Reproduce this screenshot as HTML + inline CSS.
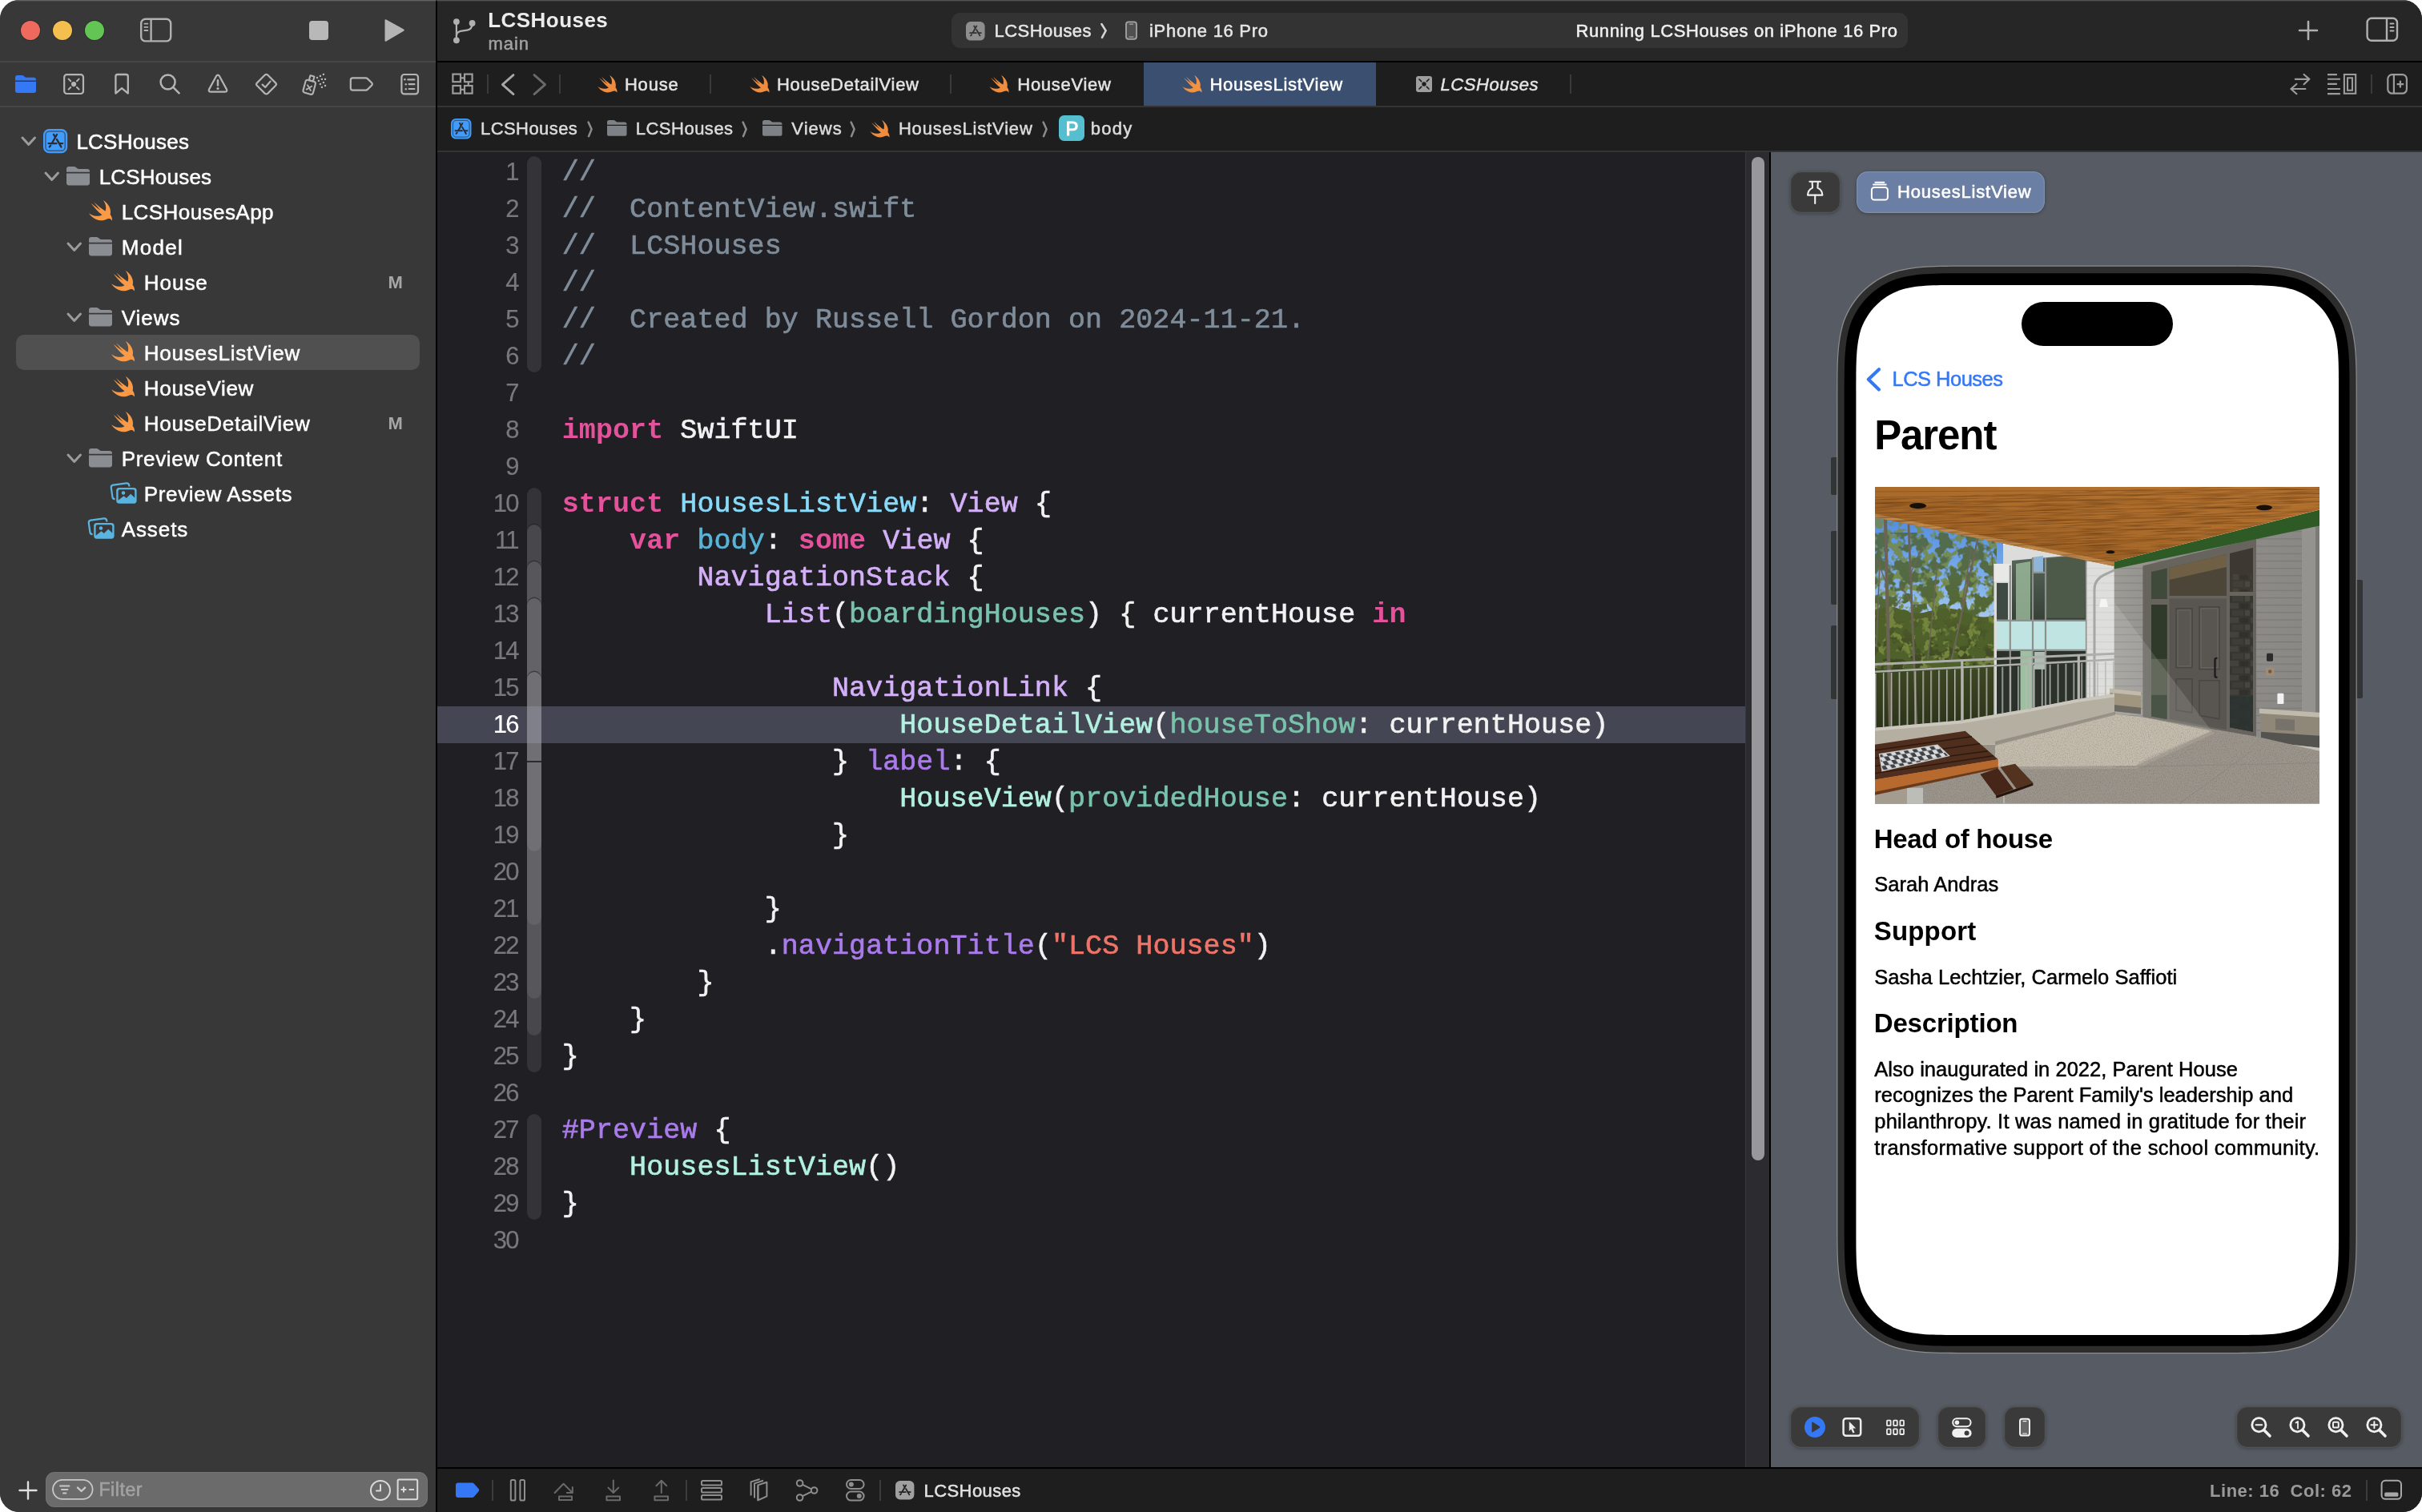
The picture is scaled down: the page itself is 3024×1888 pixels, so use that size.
<!DOCTYPE html><html lang="en"><head><meta charset="utf-8"><title>LCSHouses — HousesListView.swift</title><style>
html,body{margin:0;padding:0;background:#fff;}
body{width:3024px;height:1888px;overflow:hidden;position:relative;font-family:"Liberation Sans",sans-serif;}
#win{position:absolute;left:0;top:0;width:3024px;height:1888px;overflow:hidden;border-radius:24px;background:#1e1e1e;will-change:transform;}
#win div,#win span.t,#win svg{position:absolute;}
#win svg{overflow:visible;display:block;}
.t{white-space:pre;line-height:1;margin:0;padding:0;-webkit-text-stroke:.5px currentColor;}
.ln{font-size:31px;letter-spacing:-1.9px;-webkit-text-stroke:.2px currentColor !important;}
.code{font-family:"Liberation Mono",monospace;font-size:35px;letter-spacing:.07px;color:#f2f2f2;-webkit-text-stroke:.65px currentColor;}
.code span{-webkit-text-stroke:.65px currentColor;}
.code .k{-webkit-text-stroke:0;}
</style></head><body><div id="win">
<div style="left:0px;top:0px;width:544px;height:1888px;background:#383838;"></div>
<div style="left:544px;top:0px;width:2px;height:1888px;background:#000;"></div>
<div style="left:546px;top:0px;width:2478px;height:76px;background:#262626;"></div>
<div style="left:546px;top:76px;width:2478px;height:2px;background:#000;"></div>
<div style="left:546px;top:78px;width:2478px;height:54px;background:#1e1e1e;"></div>
<div style="left:546px;top:132px;width:2478px;height:2px;background:#343434;"></div>
<div style="left:546px;top:134px;width:2478px;height:54px;background:#1e1e1e;"></div>
<div style="left:546px;top:188px;width:2478px;height:2px;background:#343434;"></div>
<div style="left:0px;top:76px;width:544px;height:2px;background:#464646;"></div>
<div style="left:0px;top:132px;width:544px;height:2px;background:#464646;"></div>
<div style="left:0;top:0;width:3024px;height:1px;background:rgba(255,255,255,.21)"></div>
<div style="left:0;top:1px;width:3024px;height:1px;background:rgba(255,255,255,.07)"></div>
<div style="left:25.8px;top:25.8px;width:24.4px;height:24.4px;border-radius:50%;background:#ee6a5f;box-shadow:0 0 0 1px rgba(0,0,0,.18)"></div>
<div style="left:65.8px;top:25.8px;width:24.4px;height:24.4px;border-radius:50%;background:#f5bf4f;box-shadow:0 0 0 1px rgba(0,0,0,.18)"></div>
<div style="left:105.8px;top:25.8px;width:24.4px;height:24.4px;border-radius:50%;background:#62c554;box-shadow:0 0 0 1px rgba(0,0,0,.18)"></div>
<svg style="left:174px;top:21px;" width="42" height="33" viewBox="0 0 42 33"><g fill="none" stroke="#b0b0b0" stroke-width="2.4"><rect x="2.2" y="2.8" width="37" height="27.6" rx="5.5"/><path d="M14.6 3V30"/></g><g stroke="#b0b0b0" stroke-width="1.8" stroke-linecap="round"><path d="M6.4 8.6H10.4M6.4 12.8H10.4M6.4 17H10.4"/></g></svg>
<div style="left:386px;top:26px;width:24px;height:24px;background:#b8b8b8;border-radius:4px"></div>
<svg style="left:478px;top:22px;" width="30" height="32" viewBox="0 0 30 32"><path d="M2.5 3.6Q2.5 1.6 4.3 2.5L26 14.4Q27.8 15.6 26 16.8L4.3 29.5Q2.5 30.4 2.5 28.4Z" fill="#b4b4b4"/></svg>
<svg style="left:563px;top:21px;" width="34" height="35" viewBox="0 0 34 35"><g fill="#b0b0b0"><circle cx="6.9" cy="6.1" r="3.9"/><circle cx="6.9" cy="29.3" r="3.9"/><circle cx="26.6" cy="8" r="3.9"/></g><g fill="none" stroke="#b0b0b0" stroke-width="2.2"><path d="M6.9 6V29"/><path d="M26.6 8Q26.6 15.6 20.4 16.6L12 17.8Q6.9 18.8 6.9 24"/></g></svg>
<span class="t" style="top:12.29px;font-size:26px;color:#ececec;left:609.23px;font-weight:700;-webkit-text-stroke:0;letter-spacing:0.459px">LCSHouses</span>
<span class="t" style="top:44.18px;font-size:22px;color:#a2a2a2;left:609.50px;letter-spacing:0.948px">main</span>
<div style="left:1188px;top:16px;width:1194px;height:44px;background:#333333;border-radius:11px"></div>
<svg style="left:1205.5px;top:26.8px" width="23.6" height="23.6" viewBox="0 0 30 30"><rect x="0" y="0" width="30" height="30" rx="7.4" fill="#8e8e8e"/><g stroke="#333" stroke-width="2.3" stroke-linecap="round" fill="none"><path d="M16.9 7L11 17.4"/><path d="M12.9 6.9L14.5 9.6"/><path d="M16.7 12.8L22.2 22.3"/><path d="M6.5 18H16.4M20.9 18H24"/><path d="M7.7 22.3L9.2 20.5"/></g></svg>
<span class="t" style="top:27.58px;font-size:22px;color:#e6e6e6;left:1241.50px;letter-spacing:0.455px">LCSHouses</span>
<svg style="left:1372px;top:27px;" width="14" height="24" viewBox="0 0 14 24"><path d="M3.4 3L8.6 11.4L4 19.8" fill="none" stroke="#d4d4d4" stroke-width="2.6" stroke-linecap="round"/></svg>
<svg style="left:1403px;top:24px;" width="19" height="28" viewBox="0 0 19 28"><rect x="3" y="3.4" width="13" height="21.4" rx="3" fill="#505050" stroke="#a4a4a4" stroke-width="1.8"/><path d="M7.4 6.2H11.6M7 22.2H12" stroke="#a4a4a4" stroke-width="1.2" stroke-linecap="round"/></svg>
<span class="t" style="top:27.58px;font-size:22px;color:#e6e6e6;left:1435.00px;letter-spacing:0.716px">iPhone 16 Pro</span>
<span class="t" style="top:27.58px;font-size:22px;color:#f0f0f0;left:1967.50px;letter-spacing:0.604px">Running LCSHouses on iPhone 16 Pro</span>
<svg style="left:2868px;top:24px;" width="28" height="28" viewBox="0 0 28 28"><path d="M14 3V25M3 14H25" stroke="#b0b0b0" stroke-width="2.6" stroke-linecap="round"/></svg>
<svg style="left:2953px;top:20px;" width="43" height="34" viewBox="0 0 43 34"><g fill="none" stroke="#b0b0b0" stroke-width="2.4"><rect x="2.6" y="2.8" width="37.4" height="28" rx="5.5"/><path d="M27 3V31"/></g><g stroke="#b0b0b0" stroke-width="2" stroke-linecap="round"><path d="M31.5 9.5H35.5M31.5 14H35.5M31.5 18.5H35.5"/></g></svg>
<svg style="left:563px;top:90px;" width="30" height="30" viewBox="0 0 30 30"><g fill="none" stroke="#9c9c9c" stroke-width="2.2"><rect x="2.4" y="2.6" width="9.6" height="9.6"/><rect x="17" y="2.6" width="9.6" height="9.6"/><rect x="2.4" y="17" width="9.6" height="9.6"/><rect x="17" y="17" width="9.6" height="9.6"/><path d="M12 7.4H17M21.8 12.2V17M12 21.8H17"/></g></svg>
<div style="left:608px;top:93px;width:2px;height:24px;background:#3a3a3a;"></div>
<svg style="left:622px;top:90px;" width="24" height="32" viewBox="0 0 24 32"><path d="M19 3.6L5.4 15.6L19 27.6" fill="none" stroke="#a8a8a8" stroke-width="2.8" stroke-linecap="round" stroke-linejoin="round"/></svg>
<svg style="left:662px;top:90px;" width="24" height="32" viewBox="0 0 24 32"><path d="M5 3.6L18.6 15.6L5 27.6" fill="none" stroke="#6a6a6a" stroke-width="2.8" stroke-linecap="round" stroke-linejoin="round"/></svg>
<div style="left:698px;top:93px;width:2px;height:24px;background:#3a3a3a;"></div>
<div style="left:1428px;top:78px;width:290px;height:54px;background:#3b5070;"></div>
<svg style="left:745.8px;top:94.4px" width="24.5" height="21.5" viewBox="2.41 3.41 18.12 16.22" preserveAspectRatio="none"><path d="M13.543 3.41c4.114 2.47 6.545 7.162 5.549 11.131-.024.093-.05.181-.076.272l.002.001c2.062 2.538 1.5 5.258 1.236 4.745-1.072-2.086-3.066-1.568-4.088-1.043a6.803 6.803 0 0 1-.281.158l-.02.012-.002.002c-2.115 1.123-4.957 1.205-7.812-.022a12.568 12.568 0 0 1-5.64-4.838c.649.48 1.35.902 2.097 1.252 3.019 1.414 6.051 1.311 8.197-.002C9.651 12.73 7.101 9.67 5.146 7.191a10.628 10.628 0 0 1-1.005-1.384c2.34 2.142 6.038 4.83 7.365 5.576C8.69 8.408 6.208 4.743 6.324 4.86c4.436 4.47 8.528 6.996 8.528 6.996.154.085.27.154.36.213.085-.215.16-.437.224-.668.708-2.588-.09-5.548-1.893-7.992z" fill="#ee8d40"/></svg>
<span class="t" style="top:95.38px;font-size:22px;color:#e4e4e4;left:779.90px;letter-spacing:0.834px">House</span>
<div style="left:886px;top:93px;width:2px;height:24px;background:#3a3a3a;"></div>
<svg style="left:935.8px;top:94.4px" width="24.5" height="21.5" viewBox="2.41 3.41 18.12 16.22" preserveAspectRatio="none"><path d="M13.543 3.41c4.114 2.47 6.545 7.162 5.549 11.131-.024.093-.05.181-.076.272l.002.001c2.062 2.538 1.5 5.258 1.236 4.745-1.072-2.086-3.066-1.568-4.088-1.043a6.803 6.803 0 0 1-.281.158l-.02.012-.002.002c-2.115 1.123-4.957 1.205-7.812-.022a12.568 12.568 0 0 1-5.64-4.838c.649.48 1.35.902 2.097 1.252 3.019 1.414 6.051 1.311 8.197-.002C9.651 12.73 7.101 9.67 5.146 7.191a10.628 10.628 0 0 1-1.005-1.384c2.34 2.142 6.038 4.83 7.365 5.576C8.69 8.408 6.208 4.743 6.324 4.86c4.436 4.47 8.528 6.996 8.528 6.996.154.085.27.154.36.213.085-.215.16-.437.224-.668.708-2.588-.09-5.548-1.893-7.992z" fill="#ee8d40"/></svg>
<span class="t" style="top:95.38px;font-size:22px;color:#e4e4e4;left:970.00px;letter-spacing:0.706px">HouseDetailView</span>
<div style="left:1186px;top:93px;width:2px;height:24px;background:#3a3a3a;"></div>
<svg style="left:1235.3px;top:94.4px" width="24.5" height="21.5" viewBox="2.41 3.41 18.12 16.22" preserveAspectRatio="none"><path d="M13.543 3.41c4.114 2.47 6.545 7.162 5.549 11.131-.024.093-.05.181-.076.272l.002.001c2.062 2.538 1.5 5.258 1.236 4.745-1.072-2.086-3.066-1.568-4.088-1.043a6.803 6.803 0 0 1-.281.158l-.02.012-.002.002c-2.115 1.123-4.957 1.205-7.812-.022a12.568 12.568 0 0 1-5.64-4.838c.649.48 1.35.902 2.097 1.252 3.019 1.414 6.051 1.311 8.197-.002C9.651 12.73 7.101 9.67 5.146 7.191a10.628 10.628 0 0 1-1.005-1.384c2.34 2.142 6.038 4.83 7.365 5.576C8.69 8.408 6.208 4.743 6.324 4.86c4.436 4.47 8.528 6.996 8.528 6.996.154.085.27.154.36.213.085-.215.16-.437.224-.668.708-2.588-.09-5.548-1.893-7.992z" fill="#ee8d40"/></svg>
<span class="t" style="top:95.38px;font-size:22px;color:#e4e4e4;left:1270.30px;letter-spacing:0.705px">HouseView</span>
<svg style="left:1475.8px;top:94.4px" width="24.5" height="21.5" viewBox="2.41 3.41 18.12 16.22" preserveAspectRatio="none"><path d="M13.543 3.41c4.114 2.47 6.545 7.162 5.549 11.131-.024.093-.05.181-.076.272l.002.001c2.062 2.538 1.5 5.258 1.236 4.745-1.072-2.086-3.066-1.568-4.088-1.043a6.803 6.803 0 0 1-.281.158l-.02.012-.002.002c-2.115 1.123-4.957 1.205-7.812-.022a12.568 12.568 0 0 1-5.64-4.838c.649.48 1.35.902 2.097 1.252 3.019 1.414 6.051 1.311 8.197-.002C9.651 12.73 7.101 9.67 5.146 7.191a10.628 10.628 0 0 1-1.005-1.384c2.34 2.142 6.038 4.83 7.365 5.576C8.69 8.408 6.208 4.743 6.324 4.86c4.436 4.47 8.528 6.996 8.528 6.996.154.085.27.154.36.213.085-.215.16-.437.224-.668.708-2.588-.09-5.548-1.893-7.992z" fill="#f09444"/></svg>
<span class="t" style="top:95.38px;font-size:22px;color:#fff;left:1510.50px;letter-spacing:0.723px">HousesListView</span>
<svg style="left:1768px;top:94.9px;" width="20" height="20" viewBox="0 0 20 20"><rect x="0" y="0" width="20" height="20" rx="3" fill="#9e9e9e"/><g stroke="#1e1e1e" stroke-width="1.7" stroke-linecap="round"><path d="M4 4L6.6 6.6M16 4L13.4 6.6M4 16L6.6 13.4M16 16L13.4 13.4"/></g><circle cx="10" cy="10" r="2.7" fill="#1e1e1e"/></svg>
<span class="t" style="top:95.38px;font-size:22px;color:#e4e4e4;left:1798.50px;font-style:italic;letter-spacing:0.580px">LCSHouses</span>
<div style="left:1960px;top:93px;width:2px;height:24px;background:#3a3a3a;"></div>
<svg style="left:2857px;top:90px;" width="30" height="30" viewBox="0 0 30 30"><g fill="none" stroke="#9c9c9c" stroke-width="2.2" stroke-linecap="round" stroke-linejoin="round"><path d="M8.8 8.8H26M19.6 3L26.4 8.8L19.6 15.2"/><path d="M21.4 21H3.8M10.4 15L3.4 21L10.4 27.2"/></g></svg>
<svg style="left:2903px;top:90px;" width="42" height="30" viewBox="0 0 42 30"><g fill="none" stroke="#9c9c9c" stroke-width="2.1"><path d="M3 3.1H14.9M3 8.8H18.9M3 14.9H14.9M3 21H18.9M3 27.1H18.9"/><rect x="23.9" y="3" width="14.3" height="23.8"/><rect x="28" y="7.3" width="6" height="15.5"/></g></svg>
<div style="left:2960px;top:93px;width:2px;height:24px;background:#3a3a3a;"></div>
<svg style="left:2978px;top:90px;" width="30" height="30" viewBox="0 0 30 30"><g fill="none" stroke="#9c9c9c" stroke-width="2.2"><rect x="3.3" y="3.1" width="23.6" height="23.6" rx="5.4"/><path d="M10.9 3V27"/><path d="M14.6 15.1H23.2M18.9 10.8V19.4" stroke-linecap="butt"/></g></svg>
<svg style="left:563px;top:147.5px" width="25.5" height="25.5" viewBox="0 0 30 30"><rect x="0" y="0" width="30" height="30" rx="7.4" fill="#409cff"/><rect x="2.9" y="2.9" width="24.2" height="24.2" rx="4.8" fill="none" stroke="#38597c" stroke-width="1.5"/><g stroke="#2d2d2d" stroke-width="2.3" stroke-linecap="round" fill="none"><path d="M16.9 7L11 17.4"/><path d="M12.9 6.9L14.5 9.6"/><path d="M16.7 12.8L22.2 22.3"/><path d="M6.5 18H16.4M20.9 18H24"/><path d="M7.7 22.3L9.2 20.5"/></g></svg>
<span class="t" style="top:150.38px;font-size:22px;color:#dcdcdc;left:600.00px;letter-spacing:0.430px">LCSHouses</span>
<svg style="left:731.5px;top:150px;" width="12" height="22" viewBox="0 0 12 22"><path d="M2.6 2.6L6.6 11.4L3 20.2" fill="none" stroke="#8c8c8c" stroke-width="2.5" stroke-linecap="round" stroke-linejoin="miter"/></svg>
<svg style="left:758px;top:150px" width="24.5" height="19.8" viewBox="0 0 30 24" preserveAspectRatio="none"><path d="M0 3.2Q0 0 3.2 0H9.5Q11.3 0 12.6 1.2L13.6 2.1Q14.6 3 16 3H26.8Q30 3 30 6.2V7H0Z" fill="#7e8186"/><path d="M0 8.6H30V20.8Q30 24 26.8 24H3.2Q0 24 0 20.8Z" fill="#7e8186"/></svg>
<span class="t" style="top:150.38px;font-size:22px;color:#dcdcdc;left:793.70px;letter-spacing:0.505px">LCSHouses</span>
<svg style="left:925px;top:150px;" width="12" height="22" viewBox="0 0 12 22"><path d="M2.6 2.6L6.6 11.4L3 20.2" fill="none" stroke="#8c8c8c" stroke-width="2.5" stroke-linecap="round" stroke-linejoin="miter"/></svg>
<svg style="left:951.7px;top:150px" width="24.5" height="19.8" viewBox="0 0 30 24" preserveAspectRatio="none"><path d="M0 3.2Q0 0 3.2 0H9.5Q11.3 0 12.6 1.2L13.6 2.1Q14.6 3 16 3H26.8Q30 3 30 6.2V7H0Z" fill="#7e8186"/><path d="M0 8.6H30V20.8Q30 24 26.8 24H3.2Q0 24 0 20.8Z" fill="#7e8186"/></svg>
<span class="t" style="top:150.38px;font-size:22px;color:#dcdcdc;left:988.30px;letter-spacing:1.058px">Views</span>
<svg style="left:1060px;top:150px;" width="12" height="22" viewBox="0 0 12 22"><path d="M2.6 2.6L6.6 11.4L3 20.2" fill="none" stroke="#8c8c8c" stroke-width="2.5" stroke-linecap="round" stroke-linejoin="miter"/></svg>
<svg style="left:1085.6px;top:150px" width="24.5" height="21.5" viewBox="2.41 3.41 18.12 16.22" preserveAspectRatio="none"><path d="M13.543 3.41c4.114 2.47 6.545 7.162 5.549 11.131-.024.093-.05.181-.076.272l.002.001c2.062 2.538 1.5 5.258 1.236 4.745-1.072-2.086-3.066-1.568-4.088-1.043a6.803 6.803 0 0 1-.281.158l-.02.012-.002.002c-2.115 1.123-4.957 1.205-7.812-.022a12.568 12.568 0 0 1-5.64-4.838c.649.48 1.35.902 2.097 1.252 3.019 1.414 6.051 1.311 8.197-.002C9.651 12.73 7.101 9.67 5.146 7.191a10.628 10.628 0 0 1-1.005-1.384c2.34 2.142 6.038 4.83 7.365 5.576C8.69 8.408 6.208 4.743 6.324 4.86c4.436 4.47 8.528 6.996 8.528 6.996.154.085.27.154.36.213.085-.215.16-.437.224-.668.708-2.588-.09-5.548-1.893-7.992z" fill="#ee8d40"/></svg>
<span class="t" style="top:150.38px;font-size:22px;color:#dcdcdc;left:1121.90px;letter-spacing:0.831px">HousesListView</span>
<svg style="left:1300px;top:150px;" width="12" height="22" viewBox="0 0 12 22"><path d="M2.6 2.6L6.6 11.4L3 20.2" fill="none" stroke="#8c8c8c" stroke-width="2.5" stroke-linecap="round" stroke-linejoin="miter"/></svg>
<div style="left:1322px;top:143.7px;width:32px;height:32px;background:#55bfd0;border-radius:6.5px"></div>
<span class="t" style="top:148.68px;font-size:24px;color:#fff;left:1330.57px;-webkit-text-stroke:.9px #fff;">P</span>
<span class="t" style="top:150.38px;font-size:22px;color:#dcdcdc;left:1361.80px;letter-spacing:1.270px">body</span>
<svg style="left:19px;top:93.6px" width="26" height="22" viewBox="0 0 30 24" preserveAspectRatio="none"><path d="M0 3.2Q0 0 3.2 0H9.5Q11.3 0 12.6 1.2L13.6 2.1Q14.6 3 16 3H26.8Q30 3 30 6.2V7H0Z" fill="#3478f6"/><path d="M0 8.6H30V20.8Q30 24 26.8 24H3.2Q0 24 0 20.8Z" fill="#3478f6"/></svg>
<svg style="left:77px;top:90px;" width="30" height="30" viewBox="0 0 30 30"><g fill="none" stroke="#b4b4b4" stroke-width="2.2"><rect x="3.2" y="3.2" width="23.8" height="23.8" rx="3.2"/><g stroke-linecap="round" stroke-width="2"><path d="M8.6 8.6L11.2 11.2M21.6 8.6L19 11.2M8.6 21.6L11.2 19M21.6 21.6L19 19"/></g></g><circle cx="15.1" cy="15.1" r="3.1" fill="#b4b4b4"/></svg>
<svg style="left:140px;top:90px;" width="24" height="30" viewBox="0 0 24 30"><path d="M4.4 5.4Q4.4 3 6.8 3H17.4Q19.8 3 19.8 5.4V26.6L12.1 20.2L4.4 26.6Z" fill="none" stroke="#b4b4b4" stroke-width="2.3" stroke-linejoin="round"/></svg>
<svg style="left:197px;top:90px;" width="30" height="30" viewBox="0 0 30 30"><g fill="none" stroke="#b4b4b4" stroke-width="2.5" stroke-linecap="round"><circle cx="12.6" cy="12.4" r="9"/><path d="M19.4 19.2L26.6 26.4"/></g></svg>
<svg style="left:257px;top:90px;" width="30" height="30" viewBox="0 0 30 30"><path d="M15 3.6Q16.1 3.6 16.8 4.8L26 21.6Q27 24.4 24.4 24.6H5.6Q3 24.4 4 21.6L13.2 4.8Q13.9 3.6 15 3.6Z" fill="none" stroke="#b4b4b4" stroke-width="2.2" stroke-linejoin="round"/><path d="M15 10.2V16.6" stroke="#b4b4b4" stroke-width="2.5" stroke-linecap="round"/><circle cx="15" cy="20.6" r="1.55" fill="#b4b4b4"/></svg>
<svg style="left:317px;top:90px;" width="31" height="31" viewBox="0 0 31 31"><g fill="none" stroke="#b4b4b4" stroke-width="2.2" stroke-linejoin="round" stroke-linecap="round"><path d="M15.5 2.8Q16.4 2.8 17.4 3.8L27.2 13.6Q28.8 15.2 27.2 16.8L17.4 26.6Q15.5 28.2 13.6 26.6L3.8 16.8Q2.2 15.2 3.8 13.6L13.6 3.8Q14.6 2.8 15.5 2.8Z"/><path d="M10.6 15.6L14.2 19L20.6 11.6"/></g></svg>
<svg style="left:375px;top:90px;" width="36" height="31" viewBox="0 0 36 31"><g transform="translate(11.2 18.8) rotate(15)" fill="none" stroke="#b4b4b4" stroke-width="2.1" stroke-linejoin="round" stroke-linecap="round"><rect x="-6.4" y="-8.2" width="12.8" height="16.4" rx="2.8"/><rect x="-2.6" y="-14.4" width="5.2" height="6.2" rx=".4"/><path d="M-2.7 -1.8L2.7 3.6M2.7 -1.8L-2.7 3.6" stroke-width="1.9"/></g><g fill="#b4b4b4"><rect x="19.9" y="5.9" width="2.2" height="2.2"/><rect x="23.8" y="3.8" width="2.2" height="2.2"/><rect x="27.8" y="1.8" width="2.2" height="2.2"/><rect x="25.8" y="7.8" width="2.2" height="2.2"/><rect x="29.9" y="7.8" width="2.2" height="2.2"/><rect x="21.8" y="9.8" width="2.2" height="2.2"/><rect x="27.8" y="11.9" width="2.2" height="2.2"/><rect x="23.8" y="13.9" width="2.2" height="2.2"/><rect x="29.9" y="15.9" width="2.2" height="2.2"/><rect x="25.8" y="17.8" width="2.2" height="2.2"/></g></svg>
<svg style="left:434px;top:94px;" width="35" height="22" viewBox="0 0 35 22"><path d="M6.4 3.4H22.6Q24 3.4 25 4.4L30.4 9.8Q31.4 11 30.4 12.2L25 17.6Q24 18.6 22.6 18.6H6.4Q3.8 18.6 3.8 16V6Q3.8 3.4 6.4 3.4Z" fill="none" stroke="#b4b4b4" stroke-width="2.2" stroke-linejoin="round"/></svg>
<svg style="left:498px;top:90px;" width="28" height="30" viewBox="0 0 28 30"><rect x="3.4" y="3" width="20.6" height="24.4" rx="3.4" fill="none" stroke="#b4b4b4" stroke-width="2.2"/><g stroke="#b4b4b4" stroke-width="2.2" stroke-linecap="round"><path d="M11.4 9.4H19.4M12.6 15.2H19.4M12.6 21H19.4"/></g><g fill="#b4b4b4"><circle cx="7.4" cy="9.2" r="1.2"/><circle cx="8.8" cy="15.2" r="1.2"/><circle cx="8.8" cy="21.2" r="1.2"/></g></svg>
<div style="left:20px;top:418px;width:504px;height:43.5px;background:#505050;border-radius:10px"></div>
<svg style="left:26.25px;top:170.25px" width="19.5" height="12.5" viewBox="-2 -2 19.5 12.5"><path d="M0 0L7.75 8.5L15.5 0" fill="none" stroke="#9c9c9c" stroke-width="3" stroke-linecap="round" stroke-linejoin="round"/></svg>
<svg style="left:53.8px;top:161px" width="30.2" height="30.2" viewBox="0 0 30 30"><rect x="0" y="0" width="30" height="30" rx="7.4" fill="#409cff"/><rect x="2.9" y="2.9" width="24.2" height="24.2" rx="4.8" fill="none" stroke="#38597c" stroke-width="1.5"/><g stroke="#2d2d2d" stroke-width="2.3" stroke-linecap="round" fill="none"><path d="M16.9 7L11 17.4"/><path d="M12.9 6.9L14.5 9.6"/><path d="M16.7 12.8L22.2 22.3"/><path d="M6.5 18H16.4M20.9 18H24"/><path d="M7.7 22.3L9.2 20.5"/></g></svg>
<span class="t" style="top:163.59px;font-size:26px;color:#fff;left:95.43px;letter-spacing:0.219px">LCSHouses</span>
<svg style="left:55.25px;top:214.25px" width="19.5" height="12.5" viewBox="-2 -2 19.5 12.5"><path d="M0 0L7.75 8.5L15.5 0" fill="none" stroke="#9c9c9c" stroke-width="3" stroke-linecap="round" stroke-linejoin="round"/></svg>
<svg style="left:83px;top:207.5px" width="29" height="23.5" viewBox="0 0 30 24" preserveAspectRatio="none"><path d="M0 3.2Q0 0 3.2 0H9.5Q11.3 0 12.6 1.2L13.6 2.1Q14.6 3 16 3H26.8Q30 3 30 6.2V7H0Z" fill="#8a8d91"/><path d="M0 8.6H30V20.8Q30 24 26.8 24H3.2Q0 24 0 20.8Z" fill="#8a8d91"/></svg>
<span class="t" style="top:207.59px;font-size:26px;color:#fff;left:123.63px;letter-spacing:0.219px">LCSHouses</span>
<svg style="left:111px;top:250.4px" width="29" height="25.4" viewBox="2.41 3.41 18.12 16.22" preserveAspectRatio="none"><path d="M13.543 3.41c4.114 2.47 6.545 7.162 5.549 11.131-.024.093-.05.181-.076.272l.002.001c2.062 2.538 1.5 5.258 1.236 4.745-1.072-2.086-3.066-1.568-4.088-1.043a6.803 6.803 0 0 1-.281.158l-.02.012-.002.002c-2.115 1.123-4.957 1.205-7.812-.022a12.568 12.568 0 0 1-5.64-4.838c.649.48 1.35.902 2.097 1.252 3.019 1.414 6.051 1.311 8.197-.002C9.651 12.73 7.101 9.67 5.146 7.191a10.628 10.628 0 0 1-1.005-1.384c2.34 2.142 6.038 4.83 7.365 5.576C8.69 8.408 6.208 4.743 6.324 4.86c4.436 4.47 8.528 6.996 8.528 6.996.154.085.27.154.36.213.085-.215.16-.437.224-.668.708-2.588-.09-5.548-1.893-7.992z" fill="#fa9a46"/></svg>
<span class="t" style="top:251.59px;font-size:26px;color:#fff;left:151.63px;letter-spacing:0.445px">LCSHousesApp</span>
<svg style="left:83.25px;top:302.25px" width="19.5" height="12.5" viewBox="-2 -2 19.5 12.5"><path d="M0 0L7.75 8.5L15.5 0" fill="none" stroke="#9c9c9c" stroke-width="3" stroke-linecap="round" stroke-linejoin="round"/></svg>
<svg style="left:111px;top:295.5px" width="29" height="23.5" viewBox="0 0 30 24" preserveAspectRatio="none"><path d="M0 3.2Q0 0 3.2 0H9.5Q11.3 0 12.6 1.2L13.6 2.1Q14.6 3 16 3H26.8Q30 3 30 6.2V7H0Z" fill="#8a8d91"/><path d="M0 8.6H30V20.8Q30 24 26.8 24H3.2Q0 24 0 20.8Z" fill="#8a8d91"/></svg>
<span class="t" style="top:295.59px;font-size:26px;color:#fff;left:151.63px;letter-spacing:1.365px">Model</span>
<svg style="left:139px;top:338.4px" width="29" height="25.4" viewBox="2.41 3.41 18.12 16.22" preserveAspectRatio="none"><path d="M13.543 3.41c4.114 2.47 6.545 7.162 5.549 11.131-.024.093-.05.181-.076.272l.002.001c2.062 2.538 1.5 5.258 1.236 4.745-1.072-2.086-3.066-1.568-4.088-1.043a6.803 6.803 0 0 1-.281.158l-.02.012-.002.002c-2.115 1.123-4.957 1.205-7.812-.022a12.568 12.568 0 0 1-5.64-4.838c.649.48 1.35.902 2.097 1.252 3.019 1.414 6.051 1.311 8.197-.002C9.651 12.73 7.101 9.67 5.146 7.191a10.628 10.628 0 0 1-1.005-1.384c2.34 2.142 6.038 4.83 7.365 5.576C8.69 8.408 6.208 4.743 6.324 4.86c4.436 4.47 8.528 6.996 8.528 6.996.154.085.27.154.36.213.085-.215.16-.437.224-.668.708-2.588-.09-5.548-1.893-7.992z" fill="#fa9a46"/></svg>
<span class="t" style="top:339.59px;font-size:26px;color:#fff;left:179.83px;letter-spacing:0.958px">House</span>
<span class="t" style="top:341.78px;font-size:22px;color:#a6a6a6;left:484.50px;font-weight:700;-webkit-text-stroke:0;">M</span>
<svg style="left:83.25px;top:390.25px" width="19.5" height="12.5" viewBox="-2 -2 19.5 12.5"><path d="M0 0L7.75 8.5L15.5 0" fill="none" stroke="#9c9c9c" stroke-width="3" stroke-linecap="round" stroke-linejoin="round"/></svg>
<svg style="left:111px;top:383.5px" width="29" height="23.5" viewBox="0 0 30 24" preserveAspectRatio="none"><path d="M0 3.2Q0 0 3.2 0H9.5Q11.3 0 12.6 1.2L13.6 2.1Q14.6 3 16 3H26.8Q30 3 30 6.2V7H0Z" fill="#8a8d91"/><path d="M0 8.6H30V20.8Q30 24 26.8 24H3.2Q0 24 0 20.8Z" fill="#8a8d91"/></svg>
<span class="t" style="top:383.59px;font-size:26px;color:#fff;left:151.63px;letter-spacing:1.025px">Views</span>
<svg style="left:139px;top:426.4px" width="29" height="25.4" viewBox="2.41 3.41 18.12 16.22" preserveAspectRatio="none"><path d="M13.543 3.41c4.114 2.47 6.545 7.162 5.549 11.131-.024.093-.05.181-.076.272l.002.001c2.062 2.538 1.5 5.258 1.236 4.745-1.072-2.086-3.066-1.568-4.088-1.043a6.803 6.803 0 0 1-.281.158l-.02.012-.002.002c-2.115 1.123-4.957 1.205-7.812-.022a12.568 12.568 0 0 1-5.64-4.838c.649.48 1.35.902 2.097 1.252 3.019 1.414 6.051 1.311 8.197-.002C9.651 12.73 7.101 9.67 5.146 7.191a10.628 10.628 0 0 1-1.005-1.384c2.34 2.142 6.038 4.83 7.365 5.576C8.69 8.408 6.208 4.743 6.324 4.86c4.436 4.47 8.528 6.996 8.528 6.996.154.085.27.154.36.213.085-.215.16-.437.224-.668.708-2.588-.09-5.548-1.893-7.992z" fill="#fa9a46"/></svg>
<span class="t" style="top:427.59px;font-size:26px;color:#fff;left:179.83px;letter-spacing:0.760px">HousesListView</span>
<svg style="left:139px;top:470.4px" width="29" height="25.4" viewBox="2.41 3.41 18.12 16.22" preserveAspectRatio="none"><path d="M13.543 3.41c4.114 2.47 6.545 7.162 5.549 11.131-.024.093-.05.181-.076.272l.002.001c2.062 2.538 1.5 5.258 1.236 4.745-1.072-2.086-3.066-1.568-4.088-1.043a6.803 6.803 0 0 1-.281.158l-.02.012-.002.002c-2.115 1.123-4.957 1.205-7.812-.022a12.568 12.568 0 0 1-5.64-4.838c.649.48 1.35.902 2.097 1.252 3.019 1.414 6.051 1.311 8.197-.002C9.651 12.73 7.101 9.67 5.146 7.191a10.628 10.628 0 0 1-1.005-1.384c2.34 2.142 6.038 4.83 7.365 5.576C8.69 8.408 6.208 4.743 6.324 4.86c4.436 4.47 8.528 6.996 8.528 6.996.154.085.27.154.36.213.085-.215.16-.437.224-.668.708-2.588-.09-5.548-1.893-7.992z" fill="#fa9a46"/></svg>
<span class="t" style="top:471.59px;font-size:26px;color:#fff;left:179.83px;letter-spacing:0.680px">HouseView</span>
<svg style="left:139px;top:514.4px" width="29" height="25.4" viewBox="2.41 3.41 18.12 16.22" preserveAspectRatio="none"><path d="M13.543 3.41c4.114 2.47 6.545 7.162 5.549 11.131-.024.093-.05.181-.076.272l.002.001c2.062 2.538 1.5 5.258 1.236 4.745-1.072-2.086-3.066-1.568-4.088-1.043a6.803 6.803 0 0 1-.281.158l-.02.012-.002.002c-2.115 1.123-4.957 1.205-7.812-.022a12.568 12.568 0 0 1-5.64-4.838c.649.48 1.35.902 2.097 1.252 3.019 1.414 6.051 1.311 8.197-.002C9.651 12.73 7.101 9.67 5.146 7.191a10.628 10.628 0 0 1-1.005-1.384c2.34 2.142 6.038 4.83 7.365 5.576C8.69 8.408 6.208 4.743 6.324 4.86c4.436 4.47 8.528 6.996 8.528 6.996.154.085.27.154.36.213.085-.215.16-.437.224-.668.708-2.588-.09-5.548-1.893-7.992z" fill="#fa9a46"/></svg>
<span class="t" style="top:515.59px;font-size:26px;color:#fff;left:179.83px;letter-spacing:0.670px">HouseDetailView</span>
<span class="t" style="top:517.78px;font-size:22px;color:#a6a6a6;left:484.50px;font-weight:700;-webkit-text-stroke:0;">M</span>
<svg style="left:83.25px;top:566.25px" width="19.5" height="12.5" viewBox="-2 -2 19.5 12.5"><path d="M0 0L7.75 8.5L15.5 0" fill="none" stroke="#9c9c9c" stroke-width="3" stroke-linecap="round" stroke-linejoin="round"/></svg>
<svg style="left:111px;top:559.5px" width="29" height="23.5" viewBox="0 0 30 24" preserveAspectRatio="none"><path d="M0 3.2Q0 0 3.2 0H9.5Q11.3 0 12.6 1.2L13.6 2.1Q14.6 3 16 3H26.8Q30 3 30 6.2V7H0Z" fill="#8a8d91"/><path d="M0 8.6H30V20.8Q30 24 26.8 24H3.2Q0 24 0 20.8Z" fill="#8a8d91"/></svg>
<span class="t" style="top:559.59px;font-size:26px;color:#fff;left:151.63px;letter-spacing:0.695px">Preview Content</span>
<svg style="left:137.6px;top:602px" width="33" height="28" viewBox="0 0 33 28"><rect x="1.5" y="2.4" width="22.6" height="17.6" rx="3" fill="none" stroke="#5ab4e0" stroke-width="2.2" transform="rotate(-8 12.8 11.2)"/><rect x="5.6" y="5.4" width="28.4" height="22.8" rx="4.6" fill="#383838"/><rect x="7.2" y="6.9" width="25.4" height="19.8" rx="3.6" fill="#5ab4e0"/><path d="M9.6 11.3Q9.6 9.3 11.6 9.3H28.2Q30.2 9.3 30.2 11.3V19.4L25.2 14.8L19.8 20L16.6 17.2L9.6 22.8Z" fill="#383838"/><circle cx="16" cy="13.4" r="2.25" fill="#5ab4e0"/></svg>
<span class="t" style="top:603.59px;font-size:26px;color:#fff;left:179.83px;letter-spacing:0.646px">Preview Assets</span>
<svg style="left:109.6px;top:646px" width="33" height="28" viewBox="0 0 33 28"><rect x="1.5" y="2.4" width="22.6" height="17.6" rx="3" fill="none" stroke="#5ab4e0" stroke-width="2.2" transform="rotate(-8 12.8 11.2)"/><rect x="5.6" y="5.4" width="28.4" height="22.8" rx="4.6" fill="#383838"/><rect x="7.2" y="6.9" width="25.4" height="19.8" rx="3.6" fill="#5ab4e0"/><path d="M9.6 11.3Q9.6 9.3 11.6 9.3H28.2Q30.2 9.3 30.2 11.3V19.4L25.2 14.8L19.8 20L16.6 17.2L9.6 22.8Z" fill="#383838"/><circle cx="16" cy="13.4" r="2.25" fill="#5ab4e0"/></svg>
<span class="t" style="top:647.59px;font-size:26px;color:#fff;left:151.63px;letter-spacing:0.932px">Assets</span>
<svg style="left:22px;top:1848px;" width="26" height="26" viewBox="0 0 26 26"><path d="M13 2.5V23.5M2.5 13H23.5" stroke="#e0e0e0" stroke-width="2.4" stroke-linecap="round"/></svg>
<div style="left:56.5px;top:1838.3px;width:477.3px;height:43.3px;background:#6b6b6b;border-radius:11px;box-shadow:inset 0 0 0 1px rgba(255,255,255,.06)"></div>
<svg style="left:64px;top:1846px;" width="54" height="28" viewBox="0 0 54 28"><rect x="2" y="1.8" width="49.6" height="24" rx="12" fill="none" stroke="#c8c8c8" stroke-width="1.8"/><g stroke="#c8c8c8" stroke-width="2" stroke-linecap="round"><path d="M11 9.4H22.4M13 14H20.4M15 18.6H18.4"/></g><path d="M33 11.6L37.6 16L42.2 11.6" fill="none" stroke="#c8c8c8" stroke-width="2.4" stroke-linecap="round" stroke-linejoin="round"/></svg>
<span class="t" style="top:1849.03px;font-size:23px;color:#a2a2a2;left:123.44px;-webkit-text-stroke:.6px #a2a2a2;letter-spacing:0.584px">Filter</span>
<svg style="left:460px;top:1846px;" width="30" height="30" viewBox="0 0 30 30"><circle cx="15" cy="15" r="12" fill="none" stroke="#dadada" stroke-width="2"/><path d="M15 8V15.6H10" fill="none" stroke="#dadada" stroke-width="2" stroke-linecap="round" stroke-linejoin="round"/></svg>
<svg style="left:495px;top:1846px;" width="28" height="28" viewBox="0 0 28 28"><rect x="1.6" y="1.6" width="24.6" height="24.6" rx="1.5" fill="none" stroke="#dadada" stroke-width="2"/><path d="M5.6 14H12.4M9 10.6V17.4M15.6 14H22" stroke="#dadada" stroke-width="2" /></svg>
<div style="left:546px;top:190px;width:1633px;height:1642px;background:#1f1f24;"></div>
<div style="left:546px;top:882px;width:1633px;height:46px;background:#454653;"></div>
<div style="left:2179px;top:190px;width:30px;height:1642px;background:#2b2b30;"></div>
<div style="left:2179px;top:190px;width:1.4px;height:1642px;background:#38383d;"></div>
<div style="left:2209px;top:190px;width:2px;height:1642px;background:#000;"></div>
<div style="left:2187px;top:196px;width:16.3px;height:1253px;background:#98989a;border-radius:8.2px"></div>
<div style="left:658px;top:195px;width:18px;height:270px;background:#333338;border-radius:9px;box-shadow:0 -1.5px 0 0 rgba(31,31,36,.55)"></div>
<div style="left:658px;top:609px;width:18px;height:730px;background:#333338;border-radius:9px;box-shadow:0 -1.5px 0 0 rgba(31,31,36,.55)"></div>
<div style="left:658px;top:655px;width:18px;height:638px;background:#47474c;border-radius:9px;box-shadow:0 -1.5px 0 0 rgba(31,31,36,.55)"></div>
<div style="left:658px;top:701px;width:18px;height:546px;background:#56565b;border-radius:9px;box-shadow:0 -1.5px 0 0 rgba(31,31,36,.55)"></div>
<div style="left:658px;top:747px;width:18px;height:408px;background:#636367;border-radius:9px;box-shadow:0 -1.5px 0 0 rgba(31,31,36,.55)"></div>
<div style="left:658px;top:839px;width:18px;height:224px;background:#707074;border-radius:9px;box-shadow:0 -1.5px 0 0 rgba(31,31,36,.55)"></div>
<div style="left:658px;top:1391px;width:18px;height:132px;background:#333338;border-radius:9px;box-shadow:0 -1.5px 0 0 rgba(31,31,36,.55)"></div>
<div style="left:658px;top:950px;width:18px;height:2px;background:#2a2a2f;"></div>
<div style="left:658px;top:882px;width:18px;height:46px;background:rgba(150,150,170,.42);"></div>
<span class="t ln" style="right:2377.5px;top:199.26px;color:#78787d">1</span>
<span class="t code" style="left:701.8px;top:198.67px"><span style="color:#7f8c99">//</span></span>
<span class="t ln" style="right:2377.5px;top:245.26px;color:#78787d">2</span>
<span class="t code" style="left:701.8px;top:244.67px"><span style="color:#7f8c99">//  ContentView.swift</span></span>
<span class="t ln" style="right:2377.5px;top:291.26px;color:#78787d">3</span>
<span class="t code" style="left:701.8px;top:290.67px"><span style="color:#7f8c99">//  LCSHouses</span></span>
<span class="t ln" style="right:2377.5px;top:337.26px;color:#78787d">4</span>
<span class="t code" style="left:701.8px;top:336.67px"><span style="color:#7f8c99">//</span></span>
<span class="t ln" style="right:2377.5px;top:383.26px;color:#78787d">5</span>
<span class="t code" style="left:701.8px;top:382.67px"><span style="color:#7f8c99">//  Created by Russell Gordon on 2024-11-21.</span></span>
<span class="t ln" style="right:2377.5px;top:429.26px;color:#78787d">6</span>
<span class="t code" style="left:701.8px;top:428.67px"><span style="color:#7f8c99">//</span></span>
<span class="t ln" style="right:2377.5px;top:475.26px;color:#78787d">7</span>
<span class="t ln" style="right:2377.5px;top:521.26px;color:#78787d">8</span>
<span class="t code" style="left:701.8px;top:520.67px"><span class="k" style="color:#e4529c;font-weight:700">import</span> SwiftUI</span>
<span class="t ln" style="right:2377.5px;top:567.26px;color:#78787d">9</span>
<span class="t ln" style="right:2377.5px;top:613.26px;color:#78787d">10</span>
<span class="t code" style="left:701.8px;top:612.67px"><span class="k" style="color:#e4529c;font-weight:700">struct</span> <span style="color:#88daf9">HousesListView</span>: <span style="color:#d3b0f7">View</span> {</span>
<span class="t ln" style="right:2377.5px;top:659.26px;color:#78787d">11</span>
<span class="t code" style="left:701.8px;top:658.67px">    <span class="k" style="color:#e4529c;font-weight:700">var</span> <span style="color:#5bb4d8">body</span>: <span class="k" style="color:#e4529c;font-weight:700">some</span> <span style="color:#d3b0f7">View</span> {</span>
<span class="t ln" style="right:2377.5px;top:705.26px;color:#78787d">12</span>
<span class="t code" style="left:701.8px;top:704.67px">        <span style="color:#d3b0f7">NavigationStack</span> {</span>
<span class="t ln" style="right:2377.5px;top:751.26px;color:#78787d">13</span>
<span class="t code" style="left:701.8px;top:750.67px">            <span style="color:#d3b0f7">List</span>(<span style="color:#79c2ab">boardingHouses</span>) { currentHouse <span class="k" style="color:#e4529c;font-weight:700">in</span></span>
<span class="t ln" style="right:2377.5px;top:797.26px;color:#78787d">14</span>
<span class="t ln" style="right:2377.5px;top:843.26px;color:#78787d">15</span>
<span class="t code" style="left:701.8px;top:842.67px">                <span style="color:#d3b0f7">NavigationLink</span> {</span>
<span class="t ln" style="right:2377.5px;top:889.26px;color:#ffffff">16</span>
<span class="t code" style="left:701.8px;top:888.67px">                    <span style="color:#b2f0e0">HouseDetailView</span>(<span style="color:#79c2ab">houseToShow</span>: currentHouse)</span>
<span class="t ln" style="right:2377.5px;top:935.26px;color:#78787d">17</span>
<span class="t code" style="left:701.8px;top:934.67px">                } <span style="color:#aa7bea">label</span>: {</span>
<span class="t ln" style="right:2377.5px;top:981.26px;color:#78787d">18</span>
<span class="t code" style="left:701.8px;top:980.67px">                    <span style="color:#b2f0e0">HouseView</span>(<span style="color:#79c2ab">providedHouse</span>: currentHouse)</span>
<span class="t ln" style="right:2377.5px;top:1027.26px;color:#78787d">19</span>
<span class="t code" style="left:701.8px;top:1026.67px">                }</span>
<span class="t ln" style="right:2377.5px;top:1073.26px;color:#78787d">20</span>
<span class="t ln" style="right:2377.5px;top:1119.26px;color:#78787d">21</span>
<span class="t code" style="left:701.8px;top:1118.67px">            }</span>
<span class="t ln" style="right:2377.5px;top:1165.26px;color:#78787d">22</span>
<span class="t code" style="left:701.8px;top:1164.67px">            .<span style="color:#aa7bea">navigationTitle</span>(<span style="color:#ef7468">&quot;LCS Houses&quot;</span>)</span>
<span class="t ln" style="right:2377.5px;top:1211.26px;color:#78787d">23</span>
<span class="t code" style="left:701.8px;top:1210.67px">        }</span>
<span class="t ln" style="right:2377.5px;top:1257.26px;color:#78787d">24</span>
<span class="t code" style="left:701.8px;top:1256.67px">    }</span>
<span class="t ln" style="right:2377.5px;top:1303.26px;color:#78787d">25</span>
<span class="t code" style="left:701.8px;top:1302.67px">}</span>
<span class="t ln" style="right:2377.5px;top:1349.26px;color:#78787d">26</span>
<span class="t ln" style="right:2377.5px;top:1395.26px;color:#78787d">27</span>
<span class="t code" style="left:701.8px;top:1394.67px"><span style="color:#aa7bea">#Preview</span> {</span>
<span class="t ln" style="right:2377.5px;top:1441.26px;color:#78787d">28</span>
<span class="t code" style="left:701.8px;top:1440.67px">    <span style="color:#b2f0e0">HousesListView</span>()</span>
<span class="t ln" style="right:2377.5px;top:1487.26px;color:#78787d">29</span>
<span class="t code" style="left:701.8px;top:1486.67px">}</span>
<span class="t ln" style="right:2377.5px;top:1533.26px;color:#78787d">30</span>
<div style="left:546px;top:1832px;width:2478px;height:2px;background:#000;"></div>
<div style="left:546px;top:1834px;width:2478px;height:54px;background:#1e1e1e;"></div>
<svg style="left:568px;top:1850px;" width="32" height="22" viewBox="0 0 32 22"><path d="M4 1.6H21.4Q23 1.6 24 2.8L29.8 9.2Q30.8 10.6 29.8 12L24 18.8Q23 20 21.4 20H4Q1 20 1 17V4.6Q1 1.6 4 1.6Z" fill="#3478f6"/></svg>
<div style="left:614px;top:1848px;width:2px;height:26px;background:#3c3c3c;"></div>
<svg style="left:636px;top:1846px;" width="22" height="30" viewBox="0 0 22 30"><g fill="none" stroke="#8e8e8e" stroke-width="2"><rect x="1.8" y="2" width="5.6" height="25.6" rx="1.6"/><rect x="13.4" y="2" width="5.6" height="25.6" rx="1.6"/></g></svg>
<svg style="left:690px;top:1848px;" width="32" height="28" viewBox="0 0 32 28"><g fill="none" stroke="#6a6a6a" stroke-width="2" stroke-linejoin="round" stroke-linecap="round"><path d="M2.6 16L13.6 4.8L24.4 15.6"/><path d="M24.8 9V16H17.8"/><rect x="8" y="20.4" width="16" height="4.6"/></g></svg>
<svg style="left:754px;top:1846px;" width="24" height="30" viewBox="0 0 24 30"><g fill="none" stroke="#6a6a6a" stroke-width="2" stroke-linejoin="round" stroke-linecap="round"><path d="M11.8 2.6V17.6M5.4 11.6L11.8 18L18.2 11.6"/><rect x="3.4" y="22.6" width="16.6" height="4.6"/></g></svg>
<svg style="left:814px;top:1846px;" width="24" height="30" viewBox="0 0 24 30"><g fill="none" stroke="#6a6a6a" stroke-width="2" stroke-linejoin="round" stroke-linecap="round"><path d="M11.8 18V3M5.4 9.2L11.8 2.8L18.2 9.2"/><rect x="3.4" y="22.6" width="16.6" height="4.6"/></g></svg>
<div style="left:856px;top:1848px;width:2px;height:26px;background:#3c3c3c;"></div>
<svg style="left:874px;top:1847px;" width="30" height="28" viewBox="0 0 30 28"><g fill="none" stroke="#8e8e8e" stroke-width="2"><rect x="2" y="2" width="25" height="5.6" rx="1.6"/><rect x="2" y="11" width="25" height="5.6" rx="1.6"/><rect x="2" y="20" width="25" height="5.6" rx="1.6"/></g></svg>
<svg style="left:934px;top:1846px;" width="28" height="30" viewBox="0 0 28 30"><g fill="none" stroke="#8e8e8e" stroke-width="2" stroke-linejoin="round"><path d="M12.4 8.4L23.4 4.8V22.4L12.4 27.4Z"/><path d="M12.4 8.4V27.4"/><path d="M8 24.6V6.4L19 2.8"/><path d="M3.6 21.6V4.4L14.6 1"/></g></svg>
<svg style="left:992px;top:1846px;" width="32" height="30" viewBox="0 0 32 30"><g fill="none" stroke="#8e8e8e" stroke-width="2"><circle cx="6.6" cy="6" r="3.8"/><circle cx="6.6" cy="24" r="3.8"/><circle cx="24.6" cy="15" r="3.8"/><path d="M10 7.8L21.2 13.4M10 22.2L21.2 16.6"/></g></svg>
<svg style="left:1055px;top:1846px;" width="26" height="30" viewBox="0 0 26 30"><g fill="none" stroke="#8e8e8e" stroke-width="2"><rect x="2" y="2" width="21.6" height="11" rx="5.5"/><rect x="2" y="16.6" width="21.6" height="11" rx="5.5"/></g><circle cx="7.8" cy="7.5" r="3" fill="#8e8e8e"/><circle cx="17.8" cy="22.1" r="3" fill="#8e8e8e"/></svg>
<div style="left:1098px;top:1848px;width:2px;height:26px;background:#3c3c3c;"></div>
<svg style="left:1118px;top:1849px" width="23.4" height="23.4" viewBox="0 0 30 30"><rect x="0" y="0" width="30" height="30" rx="7.4" fill="#a0a0a0"/><g stroke="#222" stroke-width="2.3" stroke-linecap="round" fill="none"><path d="M16.9 7L11 17.4"/><path d="M12.9 6.9L14.5 9.6"/><path d="M16.7 12.8L22.2 22.3"/><path d="M6.5 18H16.4M20.9 18H24"/><path d="M7.7 22.3L9.2 20.5"/></g></svg>
<span class="t" style="top:1850.68px;font-size:22px;color:#e2e2e2;left:1153.50px;letter-spacing:0.430px">LCSHouses</span>
<span class="t" style="top:1850.68px;font-size:22px;color:#9a9a9a;left:2759.10px;font-weight:700;-webkit-text-stroke:0;-webkit-text-stroke:0;letter-spacing:0.513px">Line: 16  Col: 62</span>
<div style="left:2954px;top:1848px;width:2px;height:26px;background:#3c3c3c;"></div>
<svg style="left:2971px;top:1846px;" width="30" height="30" viewBox="0 0 30 30"><rect x="2.6" y="2.8" width="24.4" height="23" rx="4.6" fill="none" stroke="#a8a8a8" stroke-width="2"/><rect x="6.2" y="17.4" width="17.2" height="5.4" rx="1.6" fill="#a8a8a8"/></svg>
<div style="left:2211px;top:190px;width:813px;height:1642px;background:#575b64;"></div>
<div style="left:2235px;top:214px;width:62.6px;height:51.7px;background:#3a3a3a;border-radius:14px;box-shadow:inset 0 0 0 1.2px rgba(255,255,255,.13),0 1px 4px rgba(0,0,0,.3);"></div>
<svg style="left:2252px;top:222px;" width="30" height="36" viewBox="0 0 30 36"><g fill="none" stroke="#f0f0f0" stroke-width="2.1" stroke-linejoin="round" stroke-linecap="round"><path d="M7.4 4.8H21"/><path d="M10.6 5.2L11 12.6Q5.4 15 5 21.6H23.4Q23 15 17.4 12.6L17.8 5.2"/><path d="M14.2 21.8V32"/></g></svg>
<div style="left:2318px;top:214px;width:234.6px;height:51.7px;background:#6b7ea4;border-radius:14px;box-shadow:inset 0 0 0 1.2px rgba(255,255,255,.13),0 1px 4px rgba(0,0,0,.3);"></div>
<svg style="left:2334px;top:226px;" width="27" height="28" viewBox="0 0 27 28"><g fill="none" stroke="#fff" stroke-width="2"><rect x="2.9" y="8" width="20" height="15.6" rx="3.2"/><path d="M5 4.6H20.8M7.4 1.8H18.4" stroke-linecap="round"/></g></svg>
<span class="t" style="top:228.98px;font-size:22px;color:#fff;left:2369.10px;-webkit-text-stroke:.6px #fff;letter-spacing:0.800px">HousesListView</span>
<div style="left:2285.5px;top:570.5px;width:10px;height:47.4px;background:#333436;border-radius:2px 0 0 2px"></div>
<div style="left:2285.5px;top:662.6px;width:10px;height:92.4px;background:#333436;border-radius:2px 0 0 2px"></div>
<div style="left:2285.5px;top:781px;width:10px;height:92px;background:#333436;border-radius:2px 0 0 2px"></div>
<div style="left:2940px;top:724.4px;width:10px;height:147.4px;background:#333436;border-radius:0 2px 2px 0"></div>
<svg style="left:2280px;top:320px;" width="680" height="1384" viewBox="0 0 680 1384"><path d="M181.35 11.60L494.65 11.60C543.07 11.60 567.28 11.60 593.34 19.84C621.79 30.20 644.20 52.61 654.56 81.06C662.80 107.12 662.80 131.33 662.80 179.75L662.80 1202.05C662.80 1250.47 662.80 1274.68 654.56 1300.74C644.20 1329.19 621.79 1351.60 593.34 1361.96C567.28 1370.20 543.07 1370.20 494.65 1370.20L181.35 1370.20C132.93 1370.20 108.72 1370.20 82.66 1361.96C54.21 1351.60 31.80 1329.19 21.44 1300.74C13.20 1274.68 13.20 1250.47 13.20 1202.05L13.20 179.75C13.20 131.33 13.20 107.12 21.44 81.06C31.80 52.61 54.21 30.20 82.66 19.84C108.72 11.60 132.93 11.60 181.35 11.60Z" fill="#8c8c8c"/><path d="M181.02 12.80L494.98 12.80C542.95 12.80 566.94 12.80 592.77 20.97C620.96 31.23 643.17 53.44 653.43 81.63C661.60 107.46 661.60 131.45 661.60 179.42L661.60 1202.38C661.60 1250.35 661.60 1274.34 653.43 1300.17C643.17 1328.36 620.96 1350.57 592.77 1360.83C566.94 1369.00 542.95 1369.00 494.98 1369.00L181.02 1369.00C133.05 1369.00 109.06 1369.00 83.23 1360.83C55.04 1350.57 32.83 1328.36 22.57 1300.17C14.40 1274.34 14.40 1250.35 14.40 1202.38L14.40 179.42C14.40 131.45 14.40 107.46 22.57 81.63C32.83 53.44 55.04 31.23 83.23 20.97C109.06 12.80 133.05 12.80 181.02 12.80Z" fill="#2d2d2d"/><path d="M177.10 21.20L499.10 21.20C543.56 21.20 565.79 21.20 589.72 28.77C615.84 38.28 636.42 58.86 645.93 84.98C653.50 108.91 653.50 131.14 653.50 175.60L653.50 1206.40C653.50 1250.86 653.50 1273.09 645.93 1297.02C636.42 1323.14 615.84 1343.72 589.72 1353.23C565.79 1360.80 543.56 1360.80 499.10 1360.80L177.10 1360.80C132.64 1360.80 110.41 1360.80 86.48 1353.23C60.36 1343.72 39.78 1323.14 30.27 1297.02C22.70 1273.09 22.70 1250.86 22.70 1206.40L22.70 175.60C22.70 131.14 22.70 108.91 30.27 84.98C39.78 58.86 60.36 38.28 86.48 28.77C110.41 21.20 132.64 21.20 177.10 21.20Z" fill="#000"/><path d="M168.87 36.00L508.53 36.00C546.39 36.00 565.32 36.00 585.69 42.44C607.94 50.54 625.46 68.06 633.56 90.31C640.00 110.68 640.00 129.61 640.00 167.47L640.00 1215.53C640.00 1253.39 640.00 1272.32 633.56 1292.69C625.46 1314.94 607.94 1332.46 585.69 1340.56C565.32 1347.00 546.39 1347.00 508.53 1347.00L168.87 1347.00C131.01 1347.00 112.08 1347.00 91.71 1340.56C69.46 1332.46 51.94 1314.94 43.84 1292.69C37.40 1272.32 37.40 1253.39 37.40 1215.53L37.40 167.47C37.40 129.61 37.40 110.68 43.84 90.31C51.94 68.06 69.46 50.54 91.71 42.44C112.08 36.00 131.01 36.00 168.87 36.00Z" fill="#fff"/></svg>
<div style="left:2524.4px;top:376.8px;width:188.6px;height:55.7px;background:#000;border-radius:28px"></div>
<svg style="left:2326px;top:456px;" width="26" height="36" viewBox="0 0 26 36"><path d="M20 5.2L6.8 17.8L20 30.4" fill="none" stroke="#3478f6" stroke-width="4.2" stroke-linecap="round" stroke-linejoin="round"/></svg>
<span class="t" style="top:460.91px;font-size:25.5px;color:#3478f6;left:2362.47px;letter-spacing:-0.514px">LCS Houses</span>
<span class="t" style="top:517.63px;font-size:51px;color:#000;left:2340.13px;font-weight:700;-webkit-text-stroke:0;letter-spacing:-1.094px">Parent</span>
<svg style="left:2341px;top:608.3px;overflow:hidden" width="555" height="395.7" viewBox="0 0 555 396" preserveAspectRatio="none"><defs><linearGradient id="gsky" x1="0" y1="0" x2="0" y2="1"><stop offset="0" stop-color="#4f8ae0"/><stop offset=".6" stop-color="#7fb0ee"/><stop offset="1" stop-color="#b4d0ee"/></linearGradient><linearGradient id="gwood" x1="0" y1="1" x2="1" y2="0"><stop offset="0" stop-color="#93591f"/><stop offset=".45" stop-color="#a96a2a"/><stop offset="1" stop-color="#b87531"/></linearGradient><linearGradient id="gtree" x1="0" y1="0" x2="0" y2="1"><stop offset="0" stop-color="#54612c"/><stop offset=".45" stop-color="#3d4823"/><stop offset="1" stop-color="#2a3118"/></linearGradient><linearGradient id="gwall" x1="0" y1="0" x2="1" y2="0"><stop offset="0" stop-color="#9c9b96"/><stop offset=".2" stop-color="#92918d"/><stop offset="1" stop-color="#888783"/></linearGradient><linearGradient id="gglass" x1="0" y1="0" x2="0" y2="1"><stop offset="0" stop-color="#59665a"/><stop offset="1" stop-color="#364036"/></linearGradient><pattern id="pbal" x="0" y="0" width="9.9" height="10" patternUnits="userSpaceOnUse"><rect x="0" y="0" width="1.5" height="10" fill="#b9b9b4"/></pattern><pattern id="psid" x="0" y="0" width="10" height="9.2" patternUnits="userSpaceOnUse"><rect x="0" y="0" width="10" height="1.1" fill="rgba(0,0,0,.12)"/></pattern><pattern id="pchk" x="0" y="0" width="11" height="11" patternUnits="userSpaceOnUse" patternTransform="rotate(-8) skewX(28)"><rect width="11" height="11" fill="#d9dadb"/><rect width="5.5" height="5.5" fill="#3f4144"/><rect x="5.5" y="5.5" width="5.5" height="5.5" fill="#3f4144"/></pattern><pattern id="pstone" x="0" y="0" width="26" height="18" patternUnits="userSpaceOnUse"><rect width="26" height="18" fill="#3a3a36"/><rect x="1" y="1" width="11" height="7" fill="#55524c"/><rect x="14" y="2" width="10" height="6" fill="#2b2b29"/><rect x="4" y="10" width="14" height="7" fill="#4a4842"/><rect x="20" y="10" width="6" height="7" fill="#5e5b54"/></pattern><filter id="fleaf1" color-interpolation-filters="sRGB" x="0" y="0" width="100%" height="100%"><feTurbulence type="fractalNoise" baseFrequency="0.085" numOctaves="3" seed="4"/><feColorMatrix type="matrix" values="0 0 0 0 0.46  0 0 0 0 0.53  0 0 0 0 0.24  0 0 0 11 -5.3"/></filter><filter id="fleaf2" color-interpolation-filters="sRGB" x="0" y="0" width="100%" height="100%"><feTurbulence type="fractalNoise" baseFrequency="0.065" numOctaves="3" seed="11"/><feColorMatrix type="matrix" values="0 0 0 0 0.31  0 0 0 0 0.38  0 0 0 0 0.17  0 0 0 11 -5.0"/></filter><filter id="fgrain" color-interpolation-filters="sRGB" x="0" y="0" width="100%" height="100%"><feTurbulence type="fractalNoise" baseFrequency="0.02 0.7" numOctaves="2" seed="3"/><feColorMatrix type="matrix" values="0 0 0 0 0.25  0 0 0 0 0.13  0 0 0 0 0.03  0 0 0 2.2 -0.9"/></filter><filter id="fspeck" color-interpolation-filters="sRGB" x="0" y="0" width="100%" height="100%"><feTurbulence type="fractalNoise" baseFrequency="0.8" numOctaves="2" seed="8"/><feColorMatrix type="matrix" values="0 0 0 0 0.2  0 0 0 0 0.2  0 0 0 0 0.18  0 0 0 1.6 -0.72"/></filter><linearGradient id="gfade" x1="0" y1="0" x2="0" y2="1"><stop offset="0" stop-color="#fff" stop-opacity=".75"/><stop offset=".6" stop-color="#fff" stop-opacity=".95"/><stop offset="1" stop-color="#fff"/></linearGradient><mask id="mleaf"><rect x="0" y="30" width="160" height="200" fill="url(#gfade)"/></mask><clipPath id="cceil"><path d="M0 0H555V28L299 93V99L0 38Z"/></clipPath><clipPath id="cfloor"><path d="M0 320L150 322L300 284L336 288L477 312L555 330V396H0Z"/></clipPath></defs><rect x="0" y="30" width="160" height="150" fill="url(#gsky)"/><path d="M0 156Q16 146 30 152Q50 162 72 154Q96 148 116 158Q136 166 150 160V310H0Z" fill="url(#gtree)"/><g mask="url(#mleaf)"><rect x="0" y="36" width="152" height="190" filter="url(#fleaf1)"/><rect x="0" y="58" width="152" height="170" filter="url(#fleaf2)"/></g><g stroke="#6b6455" fill="none" stroke-linecap="round"><path d="M13 40L19 300" stroke-width="4.2"/><path d="M42 48L52 300" stroke-width="2.8"/><path d="M6 90L2 200" stroke-width="1.6"/><path d="M128 66L96 215" stroke-width="2.2"/><path d="M120 80L108 150" stroke-width="1.5"/><path d="M146 84L150 150" stroke-width="1.4"/><path d="M78 96L66 215" stroke-width="1.5"/><path d="M14 120L3 92M43 112L60 72M127 92L114 70M49 152L32 122M17 160L32 140" stroke-width="1.3"/></g><path d="M160 72L172 70L299 96V262L148.5 300V96H160Z" fill="#dcdcda"/><path d="M148.5 96H168.5V118.5H148.5Z" fill="#e8e8e6"/><path d="M152 120H166V166H152Z" fill="#3f4a42"/><path d="M171 92L264 84V167H171Z" fill="url(#gglass)"/><path d="M176 96L194 93V167H176Z" fill="#9dbd9c" opacity=".8"/><path d="M196 88L210 86V106H196Z" fill="#8fb6d9"/><path d="M214 90L262 86V164H214Z" fill="#4d5a49"/><rect x="152" y="167" width="112" height="37" fill="#bfe4e1"/><path d="M152 204H264V271L152 300Z" fill="#2b322b"/><rect x="181.5" y="205" width="16" height="90" fill="#9cc0a0"/><rect x="199" y="206" width="14" height="22" fill="#aebdb4"/><g stroke="#8e908d" stroke-width="2.2" fill="none"><path d="M168.8 98V300M197 88V290M213 88V286M264 84V270"/><path d="M152 167H264M152 204H264"/><path d="M196 107H213"/></g><rect x="264.5" y="94" width="35" height="170" fill="#dededc"/><rect x="264.5" y="94" width="35" height="170" fill="url(#psid)" opacity=".45"/><path d="M274 264V128Q274 116 286 110L299 104" fill="none" stroke="#a6a6a3" stroke-width="3"/><path d="M282 140L289 140L291 150H280Z" fill="#f4f4f2"/><path d="M298.7 97L555 44V335H298.7Z" fill="url(#gwall)"/><path d="M298.7 97L555 44V335H298.7Z" fill="url(#psid)"/><path d="M533 52L550 48V330H533Z" fill="#94938f"/><path d="M550 48L555 47V330H550Z" fill="#7c7b77"/><path d="M334.4 98.5L476 64.2V314L334.4 287.7Z" fill="#67645e"/><path d="M345 106L364.8 101.5V140H345Z" fill="#3f4a3a"/><path d="M345 147H364.8V290.5L345 287Z" fill="#2f3a2b"/><path d="M345 215H364.8V260H345Z" fill="#59604f" opacity=".7"/><path d="M367.5 101L439 84V136H367.5Z" fill="#4c4639"/><path d="M367.5 101L439 84V100L367.5 116Z" fill="#776548" opacity=".8"/><path d="M443 83L472 76V131H443Z" fill="#3d3932"/><path d="M447 108H470V131H447Z" fill="url(#pstone)" opacity=".4"/><path d="M443 136H472V306L443 300.5Z" fill="#35342f"/><path d="M443 136H472V306L443 300.5Z" fill="url(#pstone)" opacity=".45"/><path d="M443 262H472V306L443 300.5Z" fill="#2c3330" opacity=".85"/><path d="M367.5 139.6H439V303.6L367.5 290.3Z" fill="#595651"/><g fill="none" stroke="#4a4742" stroke-width="1.6"><path d="M376 152H396V226H376ZM405 150H430V228H405ZM376 240H396V282L376 279ZM405 242H430V290L405 285.5Z"/></g><g fill="none" stroke="#6f6c66" stroke-width=".8"><path d="M378 154H394V224H378ZM407 152H428V226H407Z"/></g><path d="M426.5 214Q424.5 214 424.5 216V236Q424.5 238 426.5 238" stroke="#1e1e1e" stroke-width="2.4" fill="none" stroke-linecap="round"/><path d="M298.7 144L305.3 152.8L420.4 305L335.7 287.7L298.7 283Z" fill="#fff" opacity=".13"/><rect x="489" y="208" width="8" height="10" rx="1.5" fill="#2c2c2c"/><rect x="488" y="225.5" width="10.4" height="10.4" fill="#a38a73"/><circle cx="493.2" cy="230.7" r="2.2" fill="#6b5b4d"/><rect x="502.4" y="258" width="8" height="13.3" rx="1.2" fill="#f2f2f2"/><path d="M293 252L332 256V284L295 280Z" fill="#a0957f"/><path d="M293 252L332 256V261L293 257Z" fill="#c2bbac"/><path d="M296 272L332 276V284L296 280Z" fill="#6c6962"/><path d="M480 277L555 282V311L482 306Z" fill="#8f8778"/><path d="M480 277L555 282V288L480 283Z" fill="#c0baad"/><rect x="500" y="290" width="24" height="14" fill="#77726a" transform="skewY(3.6) translate(0 -32)"/><path d="M482 306L555 311V326L482 318Z" fill="#55534f"/><path d="M484 318L555 326V333L484 324Z" fill="#c6c2ba"/><path d="M0 320L150 322L300 284L336 288L477 312L555 330V396H0Z" fill="#9b958c"/><path d="M150 322L300 284L336 288L420.4 305L325 348.5L150 350Z" fill="#c4bcad"/><path d="M420.4 305L336 340L325 348.5L150 350V353L327 352L424 308Z" fill="#b0a99c" opacity=".6"/><rect x="0" y="280" width="555" height="116" filter="url(#fspeck)" clip-path="url(#cfloor)" opacity=".3"/><g stroke="#847f77" stroke-width=".8" opacity=".7"><path d="M470 330L380 396M555 345L300 350"/></g><path d="M0 301L108 291.7L193 277L254 265L299 258.6V284L150 322L0 322Z" fill="#b5afa2"/><path d="M0 301L108 291.7L193 277L254 265L299 258.6V262.6L254 269L193 281L108 295.7L0 305Z" fill="#cbc7bc"/><path d="M150 318L300 281V285L150 323Z" fill="#7b766c" opacity=".55"/><path d="M0 233L299 218V258.6L254 265L193 277L108 291.7L0 301Z" fill="url(#pbal)"/><g stroke="#aeaeaa" fill="none"><path d="M0 221.6L299 208.3" stroke-width="3"/><path d="M0 231L299 215.7" stroke-width="2.6"/></g><g stroke="#b5b5b0" stroke-width="3.2"><path d="M108.8 217V293M193.4 213V278M254.3 210.5V266"/></g><path d="M298.7 93.3L555 28.4V48.5L298.7 102.5Z" fill="#2e5a26"/><path d="M0 0H555V28.4L298.7 93.3V99L0 38Z" fill="url(#gwood)"/><path d="M0 33.6L298.7 94V99L0 38Z" fill="#c08a4e"/><g stroke="#744416" stroke-width=".9" opacity=".5" fill="none"><path d="M0 6L555 3M0 13L555 8M0 20L555 13M0 27L555 18M0 33L520 24M60 46L470 36M130 60L420 50M200 74L370 64M260 86L330 78"/></g><g clip-path="url(#cceil)" opacity=".5"><rect x="-5" y="-5" width="570" height="115" filter="url(#fgrain)" transform="rotate(-2 555 0)"/></g><g fill="#17100a"><ellipse cx="53.6" cy="23.6" rx="10.5" ry="3.6"/><ellipse cx="486" cy="25.8" rx="10" ry="3.4"/><ellipse cx="294" cy="81.4" rx="5.6" ry="2"/></g><path d="M38 376H60V396H38Z" fill="#bdbdb8"/><path d="M0 384L40 376V396H0Z" fill="#a49c8f"/><path d="M0 322L112.7 305L153.8 340.6L0 365.7Z" fill="#4f2e1d"/><g stroke="#2e190e" stroke-width="1.3"><path d="M0 329L121 312M0 339L131 321M0 349L141 330M0 358L148 336"/></g><path d="M0 365.7L153.8 340.6V349.5L0 381Z" fill="#b8692d"/><path d="M0 381L153.8 349.5V352L0 385Z" fill="#6c3a18"/><path d="M5.5 334L78 322.5L92.5 336L9 355Z" fill="url(#pchk)"/><path d="M5.5 334L78 322.5L92.5 336L9 355Z" fill="none" stroke="#c9c9c9" stroke-width="1.3"/><path d="M131.3 359L153.4 351.6L173 377.8L151 385.5Z" fill="#452618"/><path d="M156.4 350L175 346L197.4 369.7L176.6 377Z" fill="#53321f"/><path d="M151 385.5L175 377.6L197.4 369.7V373L175 381L151.5 389Z" fill="#28150c"/><path d="M161 386V396" stroke="#b0b0ac" stroke-width="2"/></svg>
<span class="t" style="top:1030.77px;font-size:33px;color:#000;left:2339.76px;font-weight:700;-webkit-text-stroke:0;letter-spacing:-0.330px">Head of house</span>
<span class="t" style="top:1092.01px;font-size:25.5px;color:#000;left:2340.27px;letter-spacing:0.036px">Sarah Andras</span>
<span class="t" style="top:1146.07px;font-size:33px;color:#000;left:2339.76px;font-weight:700;-webkit-text-stroke:0;letter-spacing:0.168px">Support</span>
<span class="t" style="top:1207.61px;font-size:25.5px;color:#000;left:2340.27px;letter-spacing:0.043px">Sasha Lechtzier, Carmelo Saffioti</span>
<span class="t" style="top:1261.07px;font-size:33px;color:#000;left:2339.76px;font-weight:700;-webkit-text-stroke:0;letter-spacing:-0.175px">Description</span>
<span class="t" style="top:1322.51px;font-size:25.5px;color:#000;left:2340.27px;letter-spacing:0.038px">Also inaugurated in 2022, Parent House</span>
<span class="t" style="top:1355.41px;font-size:25.5px;color:#000;left:2340.27px;letter-spacing:0.016px">recognizes the Parent Family&#x27;s leadership and</span>
<span class="t" style="top:1388.41px;font-size:25.5px;color:#000;left:2340.27px;letter-spacing:0.189px">philanthropy. It was named in gratitude for their</span>
<span class="t" style="top:1421.31px;font-size:25.5px;color:#000;left:2340.27px;letter-spacing:0.326px">transformative support of the school community.</span>
<div style="left:2235px;top:1756px;width:162.4px;height:51.8px;background:#3a3a3a;border-radius:14px;box-shadow:inset 0 0 0 1.2px rgba(255,255,255,.13),0 1px 4px rgba(0,0,0,.3);"></div>
<div style="left:2418.6px;top:1756px;width:61.7px;height:51.8px;background:#3a3a3a;border-radius:14px;box-shadow:inset 0 0 0 1.2px rgba(255,255,255,.13),0 1px 4px rgba(0,0,0,.3);"></div>
<div style="left:2501.5px;top:1756px;width:52.5px;height:51.8px;background:#3a3a3a;border-radius:14px;box-shadow:inset 0 0 0 1.2px rgba(255,255,255,.13),0 1px 4px rgba(0,0,0,.3);"></div>
<div style="left:2792px;top:1756px;width:207px;height:51.8px;background:#3a3a3a;border-radius:14px;box-shadow:inset 0 0 0 1.2px rgba(255,255,255,.13),0 1px 4px rgba(0,0,0,.3);"></div>
<div style="left:2252.6px;top:1768.6px;width:26.8px;height:26.8px;border-radius:50%;background:#3478f6"></div>
<svg style="left:2260px;top:1774px;" width="14" height="16" viewBox="0 0 14 16"><path d="M2.2 2.4Q2.2 1 3.4 1.7L11.8 7Q12.8 8 11.8 9L3.4 14.3Q2.2 15 2.2 13.6Z" fill="#383838"/></svg>
<svg style="left:2299px;top:1769px;" width="28" height="28" viewBox="0 0 28 28"><rect x="2.6" y="2.2" width="21.6" height="21.6" rx="3.2" fill="none" stroke="#ececec" stroke-width="2.5"/><path d="M9.8 6L18.2 14.4L14.4 14.6L16.6 19.8L14.4 20.6L12.2 15.6L9.8 18Z" fill="#ececec"/></svg>
<svg style="left:2353px;top:1770px;" width="28" height="26" viewBox="0 0 28 26"><g fill="none" stroke="#ececec" stroke-width="1.8"><rect x="3" y="3.6" width="4.6" height="6.6" rx=".8"/><rect x="11.2" y="3.6" width="4.6" height="6.6" rx=".8"/><rect x="19.4" y="3.6" width="4.6" height="6.6" rx=".8"/><rect x="3" y="14.4" width="4.6" height="6.6" rx=".8"/><rect x="11.2" y="14.4" width="4.6" height="6.6" rx=".8"/><rect x="19.4" y="14.4" width="4.6" height="6.6" rx=".8"/></g></svg>
<svg style="left:2436px;top:1768px;" width="27" height="29" viewBox="0 0 27 29"><rect x="2.2" y="3.2" width="22.4" height="10" rx="5" fill="none" stroke="#f0f0f0" stroke-width="2"/><circle cx="7.4" cy="8.2" r="2.8" fill="#f0f0f0"/><rect x="1.2" y="15.8" width="24.4" height="11.2" rx="5.6" fill="#f0f0f0"/><circle cx="19.6" cy="21.4" r="3" fill="#3a3a3a"/></svg>
<svg style="left:2519px;top:1768px;" width="18" height="28" viewBox="0 0 18 28"><rect x="3" y="3.8" width="12" height="20.8" rx="2.6" fill="#666" stroke="#f0f0f0" stroke-width="2"/><path d="M7 6.6H11M6.6 22H11.4" stroke="#f0f0f0" stroke-width="1.2" stroke-linecap="round"/></svg>
<svg style="left:2809px;top:1768px;" width="28" height="28" viewBox="0 0 28 28"><g fill="none" stroke="#f0f0f0" stroke-width="2.8" stroke-linecap="round"><circle cx="11.4" cy="11.2" r="8.6"/><path d="M17.8 17.8L25 25" stroke-width="3.6"/><path d="M7.6 11.2H15.2" stroke-width="2"/></g></svg>
<svg style="left:2857px;top:1768px;" width="28" height="28" viewBox="0 0 28 28"><g fill="none" stroke="#f0f0f0" stroke-width="2.8" stroke-linecap="round"><circle cx="11.4" cy="11.2" r="8.6"/><path d="M17.8 17.8L25 25" stroke-width="3.6"/><path d="M9.6 8.6L12 7V15.6" stroke-width="1.8" stroke-linejoin="round"/></g></svg>
<svg style="left:2905px;top:1768px;" width="28" height="28" viewBox="0 0 28 28"><g fill="none" stroke="#f0f0f0" stroke-width="2.8" stroke-linecap="round"><circle cx="11.4" cy="11.2" r="8.6"/><path d="M17.8 17.8L25 25" stroke-width="3.6"/><rect x="8" y="7.8" width="6.8" height="6.8" rx="1.2" stroke-width="2"/></g></svg>
<svg style="left:2953px;top:1768px;" width="28" height="28" viewBox="0 0 28 28"><g fill="none" stroke="#f0f0f0" stroke-width="2.8" stroke-linecap="round"><circle cx="11.4" cy="11.2" r="8.6"/><path d="M17.8 17.8L25 25" stroke-width="3.6"/><path d="M7.4 11.2H15.4M11.4 7.2V15.2" stroke-width="2"/></g></svg>
</div></body></html>
